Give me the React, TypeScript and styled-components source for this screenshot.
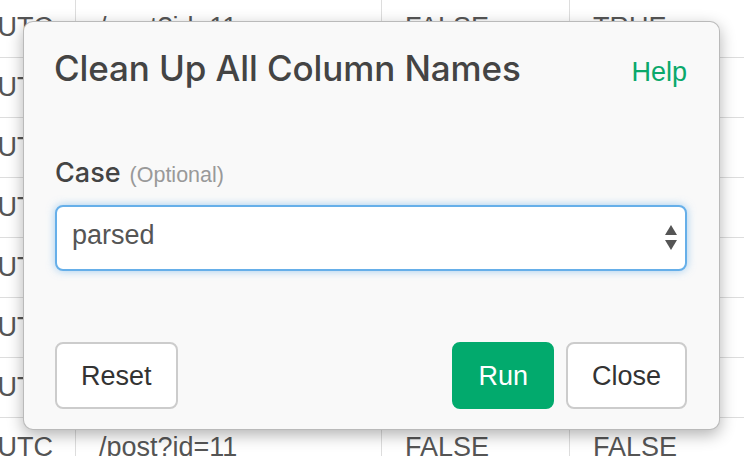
import React from "react";
import styled, { createGlobalStyle } from "styled-components";

const Global = createGlobalStyle`
  html, body { margin: 0; padding: 0; background: #ffffff; }
  body {
    width: 744px; height: 456px; overflow: hidden; position: relative;
    font-family: "Liberation Sans", Arial, sans-serif;
  }
  * { box-sizing: border-box; }
`;

const Page = styled.div`
  position: relative;
  width: 744px;
  height: 456px;
  overflow: hidden;
`;

const Table = styled.div`
  display: flex;
  flex-direction: column;
  margin-top: -2px;
`;

const Row = styled.div`
  display: grid;
  grid-template-columns: 76px 306px 188px 1fr;
  height: 60px;
  border-bottom: 1px solid #dddddd;
`;

const Cell = styled.div<{ $right?: boolean }>`
  display: flex;
  align-items: center;
  justify-content: ${(p) => (p.$right ? "flex-end" : "flex-start")};
  padding: ${(p) => (p.$right ? "0 22px 0 0" : "0 0 0 23px")};
  border-right: 1px solid #dddddd;
  font-size: 27px;
  color: #555555;
  white-space: nowrap;
  overflow: hidden;
  &:last-child { border-right: none; }
`;

const Dialog = styled.div`
  position: absolute;
  left: 23px;
  top: 21px;
  width: 697px;
  height: 409px;
  display: flex;
  flex-direction: column;
  padding: 26px 32px 20px 30px;
  background: #f9f9f9;
  border: 1px solid rgba(0, 0, 0, 0.25);
  border-radius: 10px;
  box-shadow: 0 5px 16px rgba(0, 0, 0, 0.3);
`;

const Header = styled.div`
  display: flex;
  align-items: baseline;
  justify-content: space-between;
  height: 40px;
`;

const Title = styled.h2`
  margin: 0;
  font-family: Inter, "Liberation Sans", sans-serif;
  font-size: 35px;
  line-height: 40px;
  font-weight: 500;
  color: #444444;
  letter-spacing: -0.1px;
`;

const HelpLink = styled.a`
  font-size: 27px;
  line-height: 40px;
  color: #0aa86b;
  text-decoration: none;
`;

const Label = styled.div`
  margin-top: 70px;
  height: 30px;
  display: flex;
  align-items: baseline;
  gap: 9px;
  padding-left: 1px;
`;

const LabelMain = styled.span`
  font-family: Inter, "Liberation Sans", sans-serif;
  font-size: 27px;
  line-height: 30px;
  font-weight: 500;
  color: #444444;
`;

const LabelHint = styled.span`
  font-size: 21.5px;
  line-height: 30px;
  color: #999999;
`;

const Select = styled.div`
  margin-top: 17px;
  margin-left: 1px;
  height: 66px;
  display: flex;
  align-items: center;
  justify-content: space-between;
  padding: 0 8px 6px 15px;
  background: #ffffff;
  border: 2px solid #66afe9;
  border-radius: 8px;
  box-shadow: 0 0 8px rgba(102, 175, 233, 0.6);
  font-size: 27px;
  color: #555555;
`;

const Arrows = styled.svg`
  margin-top: 6px;
  flex: none;
`;

const Footer = styled.div`
  margin-top: 71px;
  display: flex;
  align-items: center;
  gap: 12px;
  padding-left: 1px;
`;

const Spacer = styled.div`
  flex: 1;
`;

const Button = styled.button<{ $primary?: boolean }>`
  height: 67px;
  padding: 0 24px;
  border-radius: 8px;
  border: 2px solid ${(p) => (p.$primary ? "#02aa6d" : "#cccccc")};
  background: ${(p) => (p.$primary ? "#02aa6d" : "#ffffff")};
  color: ${(p) => (p.$primary ? "#ffffff" : "#333333")};
  font-family: "Liberation Sans", Arial, sans-serif;
  font-size: 27px;
  line-height: 30px;
  cursor: pointer;
`;

const rows: [string, string, string, string][] = [
  ["UTC", "/post?id=11", "FALSE", "TRUE"],
  ["UTC", "/post?id=11", "FALSE", "TRUE"],
  ["UTC", "/post?id=11", "FALSE", "TRUE"],
  ["UTC", "/post?id=11", "FALSE", "TRUE"],
  ["UTC", "/post?id=11", "FALSE", "TRUE"],
  ["UTC", "/post?id=11", "FALSE", "TRUE"],
  ["UTC", "/post?id=11", "FALSE", "TRUE"],
  ["UTC", "/post?id=11", "FALSE", "FALSE"],
];

export default function App() {
  return (
    <Page>
      <Global />
      <Table>
        {rows.map((r, i) => (
          <Row key={i}>
            <Cell $right>{r[0]}</Cell>
            <Cell>{r[1]}</Cell>
            <Cell>{r[2]}</Cell>
            <Cell>{r[3]}</Cell>
          </Row>
        ))}
      </Table>
      <Dialog>
        <Header>
          <Title>Clean Up All Column Names</Title>
          <HelpLink>Help</HelpLink>
        </Header>
        <Label>
          <LabelMain>Case</LabelMain>
          <LabelHint>(Optional)</LabelHint>
        </Label>
        <Select>
          <span>parsed</span>
          <Arrows width="12" height="26" viewBox="0 0 12 26">
            <polygon points="0,10 6,0 12,10" fill="#555555" />
            <polygon points="0,15 12,15 6,25" fill="#555555" />
          </Arrows>
        </Select>
        <Footer>
          <Button>Reset</Button>
          <Spacer />
          <Button $primary>Run</Button>
          <Button>Close</Button>
        </Footer>
      </Dialog>
    </Page>
  );
}
